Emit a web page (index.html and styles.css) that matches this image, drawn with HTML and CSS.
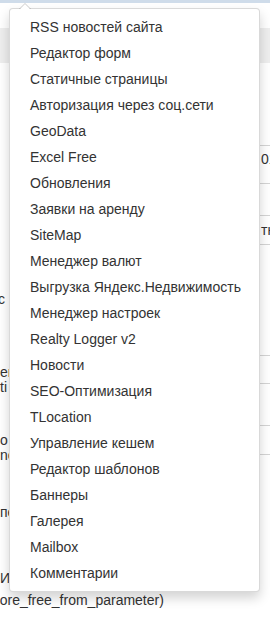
FILE: index.html
```html
<!DOCTYPE html>
<html lang="ru">
<head>
    <meta charset="UTF-8">
    <meta name="viewport" content="width=device-width, initial-scale=1.0">
    <title>Модули</title>
    <link rel="stylesheet" href="styles.css">
</head>
<body>
    <div class="page">
        <div class="topline"></div>
        <div class="thead"></div>
        <div class="content">
            <div class="left">
                <div class="note note-1">с</div>
                <div class="note note-2">ег<br>ti</div>
                <div class="note note-3">о<br>nc</div>
                <div class="note note-4">пе</div>
                <div class="note note-5">И</div>
                <div class="note note-6">ignore_free_from_parameter)</div>
            </div>
            <div class="right">
                <div class="row row-top"></div>
                <div class="row r1"><span></span><span class="cell">01</span></div>
                <div class="row r2"></div>
                <div class="row r3"><span></span><span class="cell">тн</span></div>
                <div class="row r4"></div>
                <div class="row r5"></div>
                <div class="row r6"></div>
                <div class="row r7"></div>
                <div class="row r8"></div>
            </div>
        </div>

        <ul class="dropdown">
            <li><a href="#">RSS новостей сайта</a></li>
            <li><a href="#">Редактор форм</a></li>
            <li><a href="#">Статичные страницы</a></li>
            <li><a href="#">Авторизация через соц.сети</a></li>
            <li><a href="#">GeoData</a></li>
            <li><a href="#">Excel Free</a></li>
            <li><a href="#">Обновления</a></li>
            <li><a href="#">Заявки на аренду</a></li>
            <li><a href="#">SiteMap</a></li>
            <li><a href="#">Менеджер валют</a></li>
            <li><a href="#">Выгрузка Яндекс.Недвижимость</a></li>
            <li><a href="#">Менеджер настроек</a></li>
            <li><a href="#">Realty Logger v2</a></li>
            <li><a href="#">Новости</a></li>
            <li><a href="#">SEO-Оптимизация</a></li>
            <li><a href="#">TLocation</a></li>
            <li><a href="#">Управление кешем</a></li>
            <li><a href="#">Редактор шаблонов</a></li>
            <li><a href="#">Баннеры</a></li>
            <li><a href="#">Галерея</a></li>
            <li><a href="#">Mailbox</a></li>
            <li><a href="#">Комментарии</a></li>
        </ul>
    </div>
</body>
</html>
```

FILE: styles.css
```css
html, body {
    margin: 0;
    padding: 0;
    background: #fff;
    overflow: hidden;
}
body {
    font-family: "Liberation Sans", Arial, sans-serif;
    font-size: 14px;
    color: #333;
}
.page {
    position: relative;
    width: 270px;
    height: 625px;
}
.topline {
    height: 3px;
    background: #cfdcea;
}
.thead {
    height: 35px;
    margin-top: 25px;
    background: #eee;
}
.content {
    display: grid;
    grid-template-columns: 1fr 80px;
}

/* left column: text fragments peeking out */
.left {
    line-height: 15px;
    white-space: nowrap;
}
.note-1 { margin-top: 229px; margin-left: -2px; }
.note-2 { margin-top: 58px; }
.note-3 { margin-top: 38px; }
.note-4 { margin-top: 42px; }
.note-5 { margin-top: 51px; }
.note-6 { margin-top: 7px; margin-left: -19px; }

/* right column: table rows */
.right {
    display: flex;
    flex-direction: column;
}
.row {
    box-sizing: border-box;
    display: grid;
    grid-template-columns: 1fr 10px;
    border-top: 1px solid #d4d4d4;
    line-height: 15px;
    white-space: nowrap;
}
.row .cell { padding: 6px 0 0 1px; }
.row-top { height: 82px; border-top: none; }
.r1 { height: 38px; }
.r2 { height: 32px; }
.r3 { height: 29px; }
.r3 .cell { padding-top: 7px; }
.r4 { height: 111px; }
.r5 { height: 28px; }
.r6 { height: 42px; }
.r7 { height: 29px; }
.r8 { height: 40px; }

/* dropdown */
.dropdown {
    position: absolute;
    top: 8px;
    left: 9px;
    box-sizing: border-box;
    width: 251px;
    margin: 0;
    padding: 5px 0;
    list-style: none;
    background: #fff;
    border: 1px solid rgba(0, 0, 0, 0.15);
    border-radius: 4px;
    box-shadow: 0 6px 12px rgba(0, 0, 0, 0.175);
}
.dropdown::before {
    content: "";
    position: absolute;
    top: -6px;
    left: 9px;
    border-left: 6px solid transparent;
    border-right: 6px solid transparent;
    border-bottom: 6px solid rgba(0, 0, 0, 0.2);
}
.dropdown::after {
    content: "";
    position: absolute;
    top: -5px;
    left: 10px;
    border-left: 5px solid transparent;
    border-right: 5px solid transparent;
    border-bottom: 5px solid #fff;
}
.dropdown a {
    display: block;
    padding: 3px 20px;
    line-height: 20px;
    color: #333;
    text-decoration: none;
    white-space: nowrap;
}
```
